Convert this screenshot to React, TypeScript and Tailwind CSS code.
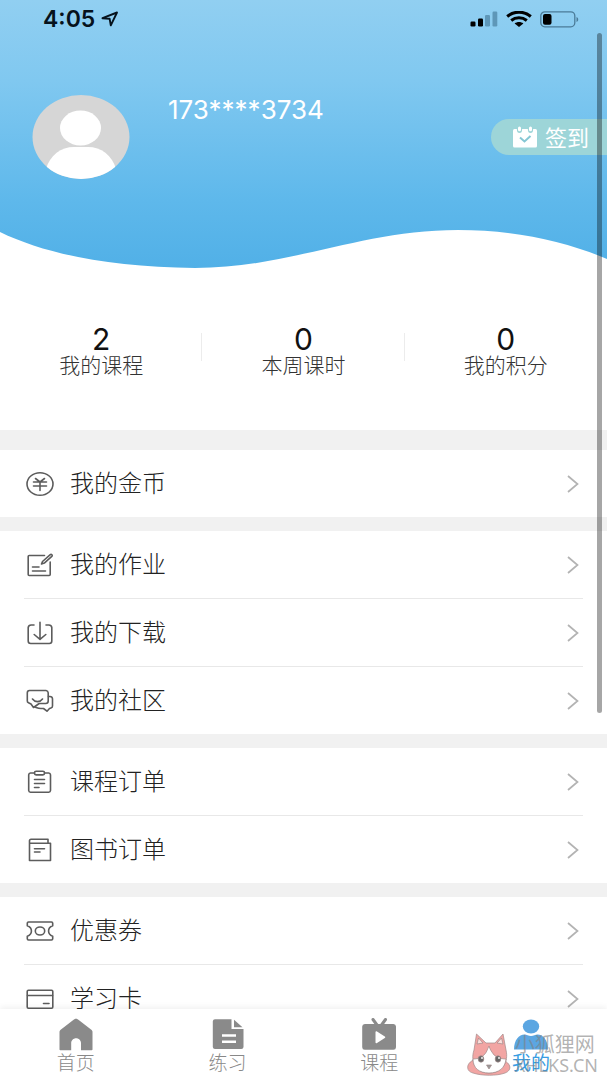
import type { ReactNode } from 'react';

type MenuItem = { label: string; icon: ReactNode };

const stats = [
  { value: 2, label: '我的课程' },
  { value: 0, label: '本周课时' },
  { value: 0, label: '我的积分' },
];

function LineIcon({ children }: { children: ReactNode }) {
  return (
    <svg
      className="w-7 h-7 shrink-0"
      viewBox="0 0 28 28"
      fill="none"
      stroke="#5c5c5c"
      strokeWidth="1.6"
      strokeLinecap="round"
      strokeLinejoin="round"
      aria-hidden="true"
    >
      {children}
    </svg>
  );
}

const menuGroups: MenuItem[][] = [
  [
    {
      label: '我的金币',
      icon: (
        <LineIcon>
          <ellipse cx="14" cy="14" rx="13" ry="11.3" />
          <path d="M9.5 8.5L14 12l4.500-3.500M7.500 12h13M7.500 16h13M14 12v8.500" />
        </LineIcon>
      ),
    },
  ],
  [
    {
      label: '我的作业',
      icon: (
        <LineIcon>
          <path d="M18.5 4.500H3.200a1 1 0 0 0-1 1v18a1 1 0 0 0 1 1h20a1 1 0 0 0 1-1V11" />
          <path d="M6.500 16h6.500M6.500 20h13M15.500 13l1-2.500 7.500-6.700c1.400-1 3 .3 1.800 1.600l-7.500 6.700z" />
        </LineIcon>
      ),
    },
    {
      label: '我的下载',
      icon: (
        <LineIcon>
          <path d="M8 6H5.200a3 3 0 0 0-3 2.500V22a2.500 2.500 0 0 0 2.500 2.500h18.600a2.500 2.500 0 0 0 2.500-2.500V8.500a3 3 0 0 0-3-2.500H20" />
          <path d="M14 3.200v17M8.200 15.500L14 20.300l5.800-4.800" />
        </LineIcon>
      ),
    },
    {
      label: '我的社区',
      icon: (
        <LineIcon>
          <path d="M3.500 3.500H20a2.500 2.500 0 0 1 2.200 2.300V14a2.500 2.500 0 0 1-2.500 2.500h-6.500l-5.700 4L5 17l-2.500-1.200a2 2 0 0 1-1.200-2v-8a2.300 2.300 0 0 1 2.200-2.300z" />
          <path d="M6.500 12c2.500 3.500 7.500 3.500 10 0M22.500 9.500H24a2.500 2.500 0 0 1 2.500 2.300V19a2 2 0 0 1-1.500 2l-1.500.5L21 24.200l-3.500-2.700H15c-3 0-4.500-1-6-1.500" />
        </LineIcon>
      ),
    },
  ],
  [
    {
      label: '课程订单',
      icon: (
        <LineIcon>
          <path d="M8 5H4.500a2 2 0 0 0-1.800 1.800v15.700a2 2 0 0 0 1.800 1.800h18.200a2 2 0 0 0 1.800-1.800V6.800A2 2 0 0 0 22.700 5H19" />
          <rect x="8.500" y="3.300" width="10" height="3.600" rx="1.600" />
          <path d="M8.500 11.500h10M8.500 15.500h10M8.500 19.500H13" />
        </LineIcon>
      ),
    },
    {
      label: '图书订单',
      icon: (
        <LineIcon>
          <path d="M3.500 7.200V4.800A1.500 1.500 0 0 1 5 3.200h17v4M3.500 7.200h21v17.300h-21z" />
          <path d="M8.500 12.800h10M8.500 16H14" />
        </LineIcon>
      ),
    },
  ],
  [
    {
      label: '优惠券',
      icon: (
        <LineIcon>
          <path d="M2.500 5h23a1.200 1.200 0 0 1 1.200 1.200v2.600c-5.500 2-5.500 8.400 0 10.400v2.600a1.200 1.200 0 0 1-1.200 1.200h-23a1.200 1.200 0 0 1-1.200-1.200v-2.600c5.500-2 5.500-8.400 0-10.400V6.200A1.200 1.200 0 0 1 2.500 5z" />
          <ellipse cx="14" cy="14" rx="4.700" ry="4" />
        </LineIcon>
      ),
    },
    {
      label: '学习卡',
      icon: (
        <LineIcon>
          <rect x="1.200" y="5.200" width="25.600" height="18" rx="1.200" />
          <path d="M1.500 10.500h25M17.500 18.500H23" />
        </LineIcon>
      ),
    },
  ],
];

const tabs = [
  {
    label: '首页',
    active: false,
    icon: (
      <path d="M17 .8c1 0 1.700.5 2.400 1L32 11.500c1 .8 1.500 1.500 1.500 2.500v17.500a.8.8 0 0 1-.8.8H22V25c0-2.600-2-4.800-4.900-4.800S12.200 22.400 12.200 25v7.300H1.300a.8.8 0 0 1-.8-.8V14c0-1 .5-1.700 1.500-2.500L14.600 1.800c.7-.5 1.400-1 2.400-1z" />
    ),
  },
  {
    label: '练习',
    active: false,
    icon: (
      <>
        <path
          fillRule="evenodd"
          d="M4 1.200h16.500V11h12v18a2.200 2.200 0 0 1-2.200 2H4a2.200 2.200 0 0 1-2.200-2V3.200A2.200 2.200 0 0 1 4 1.200zM11 16.200v2.600h14v-2.600zM11 22.500v2.600h14v-2.600z"
        />
        <path d="M23 1.800l8.500 7.500H23z" />
      </>
    ),
  },
  {
    label: '课程',
    active: false,
    icon: (
      <>
        <path d="M11 1.500L15 7M23.500 1.500L19.500 7" stroke="currentColor" strokeWidth="3" strokeLinecap="round" />
        <path
          fillRule="evenodd"
          d="M2.800 6h28.600A2.600 2.600 0 0 1 34 8.500v20.700a2.600 2.600 0 0 1-2.600 2.500H2.800a2.600 2.600 0 0 1-2.600-2.500V8.500A2.600 2.600 0 0 1 2.800 6zM13.500 14v10.400c0 .8.8 1 1.500.6l7.800-5c.6-.4.6-1.200 0-1.600L15 13.400c-.7-.4-1.500-.2-1.500.6z"
        />
      </>
    ),
  },
  {
    label: '我的',
    active: true,
    icon: (
      <>
        <ellipse cx="17" cy="8.500" rx="8.200" ry="7" />
        <path d="M0 31.500C0 22 5 16.500 10.500 16.500c2 0 4 1.500 6.500 1.500s4.500-1.500 6.500-1.500C29 16.500 34 22 34 31.500z" />
      </>
    ),
  },
];

function StatusBar() {
  return (
    <div className="flex items-center justify-between h-9 pl-[43px] pr-7 pt-[2px]">
      <div className="flex items-center gap-[6px]">
        <span className="font-['Inter','Liberation_Sans',sans-serif] text-[23px] leading-6 font-semibold text-[#06121c]">
          4:05
        </span>
        <svg className="w-[18px] h-4" viewBox="0 0 18 16" fill="none" stroke="#06121c" strokeWidth="1.9" strokeLinejoin="round">
          <path d="M1.500 7.200L16 1.500 9.800 14.300 8.600 7.700z" />
        </svg>
      </div>
      <div className="flex items-center gap-2">
        <svg className="w-7 h-4" viewBox="0 0 28 16">
          <rect x="0.500" y="10.500" width="5" height="5" rx="1.200" fill="#000" />
          <rect x="8" y="7.500" width="5" height="8" rx="1.200" fill="#000" />
          <rect x="15" y="4" width="5" height="11.500" rx="1.200" fill="#5e97b8" />
          <rect x="22.500" y="0.500" width="4.800" height="15" rx="1.200" fill="#5e97b8" />
        </svg>
        <svg className="w-[26px] h-4" viewBox="0 0 26 16" fill="none" stroke="#000" strokeWidth="3">
          <path d="M1.200 5.500C8-.3 18-.3 24.800 5.500M5.200 9.500c4.500-3.700 11-3.700 15.600 0" />
          <path d="M8.600 12.500c2.500-2 6.300-2 8.800 0L13 16z" fill="#000" stroke="none" />
        </svg>
        <svg className="w-[39px] h-[17px]" viewBox="0 0 39 17">
          <rect x="0.800" y="0.800" width="34" height="15" rx="4" fill="none" stroke="#4b7b98" strokeWidth="1.300" />
          <rect x="3" y="3" width="8.500" height="10.800" rx="2" fill="#000" />
          <path d="M36.500 6v5c2.300-1 2.300-4 0-5z" fill="#4b7b98" />
        </svg>
      </div>
    </div>
  );
}

function ProfileHeader() {
  return (
    <header className="relative h-[268px]">
      <svg className="absolute inset-0 w-full h-full" viewBox="0 0 607 268" preserveAspectRatio="none" aria-hidden="true">
        <defs>
          <linearGradient id="sky" x1="0" y1="0" x2="0" y2="1">
            <stop offset="0" stopColor="#91cff1" />
            <stop offset="0.3" stopColor="#80c8f0" />
            <stop offset="0.75" stopColor="#5eb8eb" />
            <stop offset="1" stopColor="#51b0e7" />
          </linearGradient>
        </defs>
        <path d="M0 0H607V259C565 241 515 230 458 230C360 230 290 268 195 268C110 267 45 254 0 232z" fill="url(#sky)" />
      </svg>
      <div className="relative">
        <StatusBar />
        <div className="flex items-start pl-8 pt-[59px]">
          <svg className="w-[98px] h-[84px]" viewBox="0 0 98 84" role="img" aria-label="头像">
            <defs>
              <clipPath id="avatar">
                <ellipse cx="49" cy="42" rx="48.500" ry="42" />
              </clipPath>
            </defs>
            <g clipPath="url(#avatar)">
              <rect width="98" height="84" fill="#d6d6d6" />
              <ellipse cx="48.500" cy="33" rx="20.500" ry="17.500" fill="#fff" />
              <path d="M14 84V74C18 60 29 52 42 52H56C69 52 80 60 84 74V84z" fill="#fff" />
            </g>
          </svg>
          <p className="ml-[38px] font-['Inter','Liberation_Sans',sans-serif] text-[26px] leading-[30px] text-white">173****3734</p>
          <button type="button" className="ml-auto mt-6 flex items-center gap-2 h-9 w-[116px] pl-[22px] rounded-l-full bg-[#9dd5d8] text-white">
            <svg className="w-6 h-[22px]" viewBox="0 0 24 22" aria-hidden="true">
              <rect x="0" y="3" width="24" height="18.500" rx="1.500" fill="#fff" />
              <ellipse cx="6.500" cy="3.500" rx="2.600" ry="3.500" fill="#9dd5d8" />
              <ellipse cx="17.500" cy="3.500" rx="2.600" ry="3.500" fill="#9dd5d8" />
              <rect x="5" y="0.500" width="3" height="4.800" rx="1.500" fill="#fff" />
              <rect x="16" y="0.500" width="3" height="4.800" rx="1.500" fill="#fff" />
              <path d="M7 11.500l4.500 4 6-5.500" fill="none" stroke="#86c7d4" strokeWidth="2" />
            </svg>
            <span className="pb-[3px] text-[22px] leading-6">签到</span>
          </button>
        </div>
      </div>
    </header>
  );
}

function MenuRow({ item, last }: { item: MenuItem; last: boolean }) {
  return (
    <li className={last ? 'mx-6' : 'mx-6 border-b border-[#e8e8e8]'}>
      <a href="#" className="flex items-center h-[67px] pl-[2px] pr-1">
        {item.icon}
        <span className="ml-4 pb-1 text-2xl leading-8 font-light text-[#222]">{item.label}</span>
        <svg className="ml-auto w-3 h-[18px]" viewBox="0 0 12 18" fill="none" stroke="#b3b3b3" strokeWidth="1.7" aria-hidden="true">
          <path d="M1 1l9.500 8L1 17" />
        </svg>
      </a>
    </li>
  );
}

function TabBar() {
  return (
    <nav className="relative shrink-0 h-[71px] flex bg-white shadow-[0_-2px_6px_rgba(0,0,0,0.06)]">
      {tabs.map(tab => (
        <a
          key={tab.label}
          href="#"
          className={`flex-1 flex flex-col items-center pt-[9px] ${tab.active ? 'text-[#5ba6e2]' : 'text-[#8a8a8a]'}`}
        >
          <svg className="w-[34px] h-[33px]" viewBox="0 0 34 33" fill="currentColor" aria-hidden="true">
            {tab.icon}
          </svg>
          <span className={`text-[19px] leading-[22px] ${tab.active ? 'text-[#389de3]' : 'font-light text-[#888]'}`}>{tab.label}</span>
        </a>
      ))}
    </nav>
  );
}

function Watermark() {
  return (
    <div className="absolute right-[9px] bottom-1 flex items-center gap-1 pointer-events-none">
      <svg className="w-11 h-11" viewBox="0 0 44 44" stroke="#a08a8a" strokeWidth="0.7" aria-hidden="true">
        <path d="M9 27C-1 30-2 39 6 41c9 3 24 3 32 0 8-3 6-11-5-14z" fill="#f2a5a3" />
        <path d="M7 18L9.500 2 19 11h9L36 2l3 16c3 12-4 23-17 23S3 30 7 18z" fill="#f2a5a3" />
        <path d="M10 12l1.500-6 4.500 5zM36 12l-1.500-6-4.500 5z" fill="#fbe0dd" />
        <path d="M6 27c4 0 8-1 11-4 3-3 3-5 5-9 1 4 3 6 5 9 4 3 8 4 12 4-1 9-7 14-17 14S6 36 6 27z" fill="#fff" />
        <ellipse cx="14" cy="27" rx="2.800" ry="3.200" fill="#666" />
        <ellipse cx="31" cy="27" rx="2.800" ry="3.200" fill="#666" />
        <circle cx="15" cy="26" r="0.900" fill="#fff" stroke="none" />
        <circle cx="32" cy="26" r="0.900" fill="#fff" stroke="none" />
        <path d="M19.500 33h5L22 37z" fill="#999" />
      </svg>
      <div className="flex flex-col text-[#808080]/60">
        <span className="text-[20px] leading-[22px]">小狐狸网</span>
        <span className="font-['Noto_Sans',sans-serif] text-[18px] leading-5">XHLKS.CN</span>
      </div>
    </div>
  );
}

export default function App() {
  return (
    <div className="relative h-screen flex flex-col overflow-hidden bg-white font-['Noto_Sans_CJK_SC',sans-serif]">
      <main className="flex-1 min-h-0 overflow-hidden">
        <ProfileHeader />

        <section className="flex h-[162px] pt-[57px]">
          {stats.map((stat, index) => (
            <div key={stat.label} className="relative flex-1 flex flex-col items-center">
              <span className="font-['Inter','Liberation_Sans',sans-serif] text-[30px] leading-7 text-[#111]">{stat.value}</span>
              <span className="text-[21px] leading-[22px] font-light text-[#333]">{stat.label}</span>
              {index < 2 && <span className="absolute right-0 top-2 w-px h-7 bg-[#ececec]" />}
            </div>
          ))}
        </section>

        <div className="flex flex-col gap-[14px] pt-5 bg-[#f1f1f1]">
          {menuGroups.map(group => (
            <ul key={group[0].label} className="bg-white">
              {group.map((item, index) => (
                <MenuRow key={item.label} item={item} last={index === group.length - 1} />
              ))}
            </ul>
          ))}
        </div>
      </main>

      <TabBar />
      <div className="absolute right-[5px] top-[33px] w-[5px] h-[680px] rounded-full bg-black/35" />
      <Watermark />
    </div>
  );
}
